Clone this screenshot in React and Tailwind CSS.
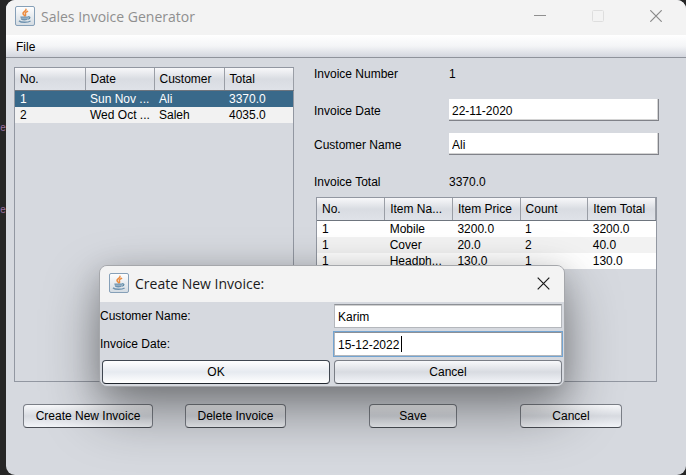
import React from "react";

const field = "bg-white text-[12px] text-black outline-none";
const sunken = "border-r border-b border-[#808289] shadow-[inset_-1px_-1px_0_#d4d4d4]";
const boxed = "border border-[#b4b7bc] border-t-[#8d9096] shadow-[inset_0_1px_0_#d0d0d0]";

function JavaIcon() {
  return (
    <svg className="h-5 w-5 shrink-0" viewBox="0 0 20 20" aria-hidden="true">
      <defs>
        <linearGradient id="tile" x1="0" y1="0" x2="0" y2="1">
          <stop offset="0" stopColor="#ffffff" />
          <stop offset="1" stopColor="#d3dbe2" />
        </linearGradient>
      </defs>
      <rect x="0.5" y="0.5" width="19" height="19" rx="1.5" fill="url(#tile)" stroke="#86a0b8" />
      <path d="M11 3.2c.8 1.700-3.400 2.500-3 4.400.2 1 1.200 1.500 1.900 2.300M12.600 5.400c-1.600.8-2.500 1.500-2.200 2.400.3.700.6 1.100-.2 2.100" fill="none" stroke="#ec8a3c" strokeWidth="1.500" strokeLinecap="round" />
      <path d="M5.300 10.600h7.900l-.9 3.200c-1.600.8-4.500.8-6.100 0z" fill="#6f93b0" />
      <path d="M6.300 12.200h6.200" stroke="#b9cbd9" strokeWidth=".7" />
      <path d="M13 10.900c2.600-.4 2.600 1.800-.3 2.300" fill="none" stroke="#5382a1" strokeWidth="1.100" />
      <path d="M4 14.900c2.200 1.900 9 1.800 11.600.1" fill="none" stroke="#6f93b0" strokeWidth="1.400" />
    </svg>
  );
}

function DataTable({ label, columns, rows, selected, widths }) {
  return (
    <table aria-label={label} className="w-full table-fixed border-collapse text-left text-[12px] leading-4 text-black">
      <colgroup>
        {widths.map((w, i) => (
          <col key={i} className={w} />
        ))}
      </colgroup>
      <thead>
        <tr className="h-[22px] bg-linear-to-b from-[#f8f8fa] via-[#d9dce2] to-[#dfe2e8]">
          {columns.map((c) => (
            <th key={c} className="border-r border-b border-r-[#9a9ea6] border-b-[#6e757e] p-0 pl-[5px] font-normal whitespace-nowrap">
              {c}
            </th>
          ))}
        </tr>
      </thead>
      <tbody>
        {rows.map((r, i) => (
          <tr
            key={i}
            className={i === selected ? "bg-[#39698a] text-white" : i % 2 ? "bg-[#f2f2f2]" : "bg-white"}
          >
            {r.map((v, j) => (
              <td key={j} className="h-4 p-0 pl-[5px] whitespace-nowrap">
                {v}
              </td>
            ))}
          </tr>
        ))}
      </tbody>
    </table>
  );
}

function FormButton({ children, tone, className }) {
  const tones = {
    plain: "border-[#7a7e86] border-b-[#4a4e55] from-[#f8f9fb] via-[#d8dbe1] to-[#f2f4f8]",
    primary: "border-[#3f4650] border-b-[#20262e] from-white via-[#e6eaf0] to-white",
  };
  return (
    <button
      type="button"
      className={`h-6 rounded border bg-linear-to-b text-[12px] text-black ${tones[tone || "plain"]} ${className}`}
    >
      {children}
    </button>
  );
}

function Dialog() {
  return (
    <div
      role="dialog"
      aria-label="Create New Invoice:"
      className="absolute top-[265px] left-[99px] w-[466px] overflow-hidden rounded-lg border border-[#a5a7ab] bg-[#d6d9df] shadow-[0_24px_56px_rgba(0,0,0,0.4),0_6px_28px_rgba(0,0,0,0.16)]"
    >
      <div className="flex h-9 items-center bg-[#f3f3f3] pr-[14px] pb-[2px] pl-[9px]">
        <JavaIcon />
        <h2 className="ml-[6px] flex-1 font-['Open_Sans',sans-serif] text-[14px] text-[#1a1a1a]">Create New Invoice:</h2>
        <button type="button" aria-label="Close">
          <svg className="h-[13px] w-[13px]" viewBox="0 0 13 13">
            <path d="M.7.7l11.600 11.600M12.300.7L.7 12.300" stroke="#1a1a1a" strokeWidth="1.200" />
          </svg>
        </button>
      </div>
      <div className="grid grid-cols-2 text-[12px]">
        <label htmlFor="newName" className="flex h-7 items-center">Customer Name:</label>
        <div className="flex h-7 items-center px-[2px]">
          <input id="newName" defaultValue="Karim" className={`${field} ${boxed} h-6 w-full pt-px pl-[3px]`} />
        </div>
        <label htmlFor="newDate" className="flex h-7 items-center">Invoice Date:</label>
        <div className="relative flex h-7 items-center px-[2px]">
          <input id="newDate" defaultValue="15-12-2022" className={`${field} h-6 w-full border border-[#b4b7bc] border-t-[#8d9096] pt-px pl-[3px] ring-1 ring-[#73a4d1]`} />
          <span className="absolute top-[6px] left-[69px] h-4 w-px bg-black" />
        </div>
        <div className="flex h-7 items-center px-[2px]">
          <FormButton tone="primary" className="w-full">OK</FormButton>
        </div>
        <div className="flex h-7 items-center px-[2px]">
          <FormButton className="w-full">Cancel</FormButton>
        </div>
      </div>
    </div>
  );
}

export default function App() {
  return (
    <div className="relative flex min-h-screen bg-[#262626] pl-[6px] font-['Liberation_Sans',Arial,sans-serif] text-[12px] text-black">
      <div aria-hidden="true" className="absolute inset-y-0 left-0 w-[6px] font-['Liberation_Mono',monospace] text-[10px] leading-4 text-[#9a6f9e]">
        <span className="absolute top-[121px] left-0">e</span>
        <span className="absolute top-[203px] left-0">e</span>
      </div>
      <main className="relative flex min-w-0 flex-1 flex-col overflow-hidden rounded-[9px] bg-[#d6d9df]">
        <header className="flex h-[35px] items-center bg-[#f3f3f3] pr-[24px] pb-[3px] pl-[9px]">
          <JavaIcon />
          <h1 className="ml-[6px] flex-1 font-['Open_Sans',sans-serif] text-[14px] text-[#8f8f8f]">Sales Invoice Generator</h1>
          <div className="flex items-center gap-[46px]">
            <button type="button" aria-label="Minimize">
              <svg className="h-3 w-3" viewBox="0 0 12 12"><path d="M0 5.500h12" stroke="#8f8f8f" /></svg>
            </button>
            <button type="button" aria-label="Maximize">
              <svg className="h-3 w-3" viewBox="0 0 12 12"><rect x=".5" y=".5" width="11" height="11" rx="1" fill="none" stroke="#dedede" /></svg>
            </button>
            <button type="button" aria-label="Close">
              <svg className="h-3 w-3" viewBox="0 0 12 12"><path d="M.3.3l11.400 11.400M11.700.3L.3 11.700" stroke="#8a8a8a" strokeWidth="1.200" /></svg>
            </button>
          </div>
        </header>
        <nav className="flex h-[23px] items-center border-b border-[#8f939b] bg-linear-to-b from-white via-[#f4f5f7] to-[#d3d6de] pt-px pl-[10px]">
          <button type="button">File</button>
        </nav>
        <div className="flex pt-[9px] pr-[29px] pl-2">
          <section className="h-[315px] w-[280px] shrink-0 border border-[#9297a1]">
            <DataTable
              label="Invoices"
              columns={["No.", "Date", "Customer", "Total"]}
              widths={["w-[70px]", "w-[69px]", "w-[70px]", "w-[69px]"]}
              selected={0}
              rows={[
                ["1", "Sun Nov ...", "Ali", "3370.0"],
                ["2", "Wed Oct ...", "Saleh", "4035.0"],
              ]}
            />
          </section>
          <section className="flex min-w-0 flex-1 flex-col pl-5">
            <div className="-mr-[2px] grid grid-cols-[135px_1fr] items-center">
              <span className="h-[14px] leading-[14px]">Invoice Number</span>
              <output className="h-[14px] leading-[14px]">1</output>
              <label htmlFor="date" className="mt-[18px] pt-px">Invoice Date</label>
              <input id="date" defaultValue="22-11-2020" className={`${field} ${sunken} mt-[18px] h-[22px] min-w-0 pt-[2px] pl-[3px]`} />
              <label htmlFor="name" className="mt-3 pt-px">Customer Name</label>
              <input id="name" defaultValue="Ali" className={`${field} ${sunken} mt-3 h-[22px] min-w-0 pt-[2px] pl-[3px]`} />
              <span className="mt-[19px] leading-4">Invoice Total</span>
              <output className="mt-[19px] leading-4">3370.0</output>
            </div>
            <div className="mt-[7px] ml-[2px] h-[185px] border border-[#9297a1]">
              <DataTable
                label="Invoice items"
                columns={["No.", "Item Na...", "Item Price", "Count", "Item Total"]}
                widths={["w-1/5", "w-1/5", "w-1/5", "w-1/5", "w-1/5"]}
                rows={[
                  ["1", "Mobile", "3200.0", "1", "3200.0"],
                  ["1", "Cover", "20.0", "2", "40.0"],
                  ["1", "Headph...", "130.0", "1", "130.0"],
                ]}
              />
            </div>
          </section>
        </div>
        <footer className="flex pt-[22px] pl-[17px]">
          <FormButton className="w-[130px]">Create New Invoice</FormButton>
          <FormButton className="ml-8 w-[101px]">Delete Invoice</FormButton>
          <FormButton className="ml-[83px] w-[88px]">Save</FormButton>
          <FormButton className="ml-[63px] w-[102px]">Cancel</FormButton>
        </footer>
      </main>
      <Dialog />
    </div>
  );
}
